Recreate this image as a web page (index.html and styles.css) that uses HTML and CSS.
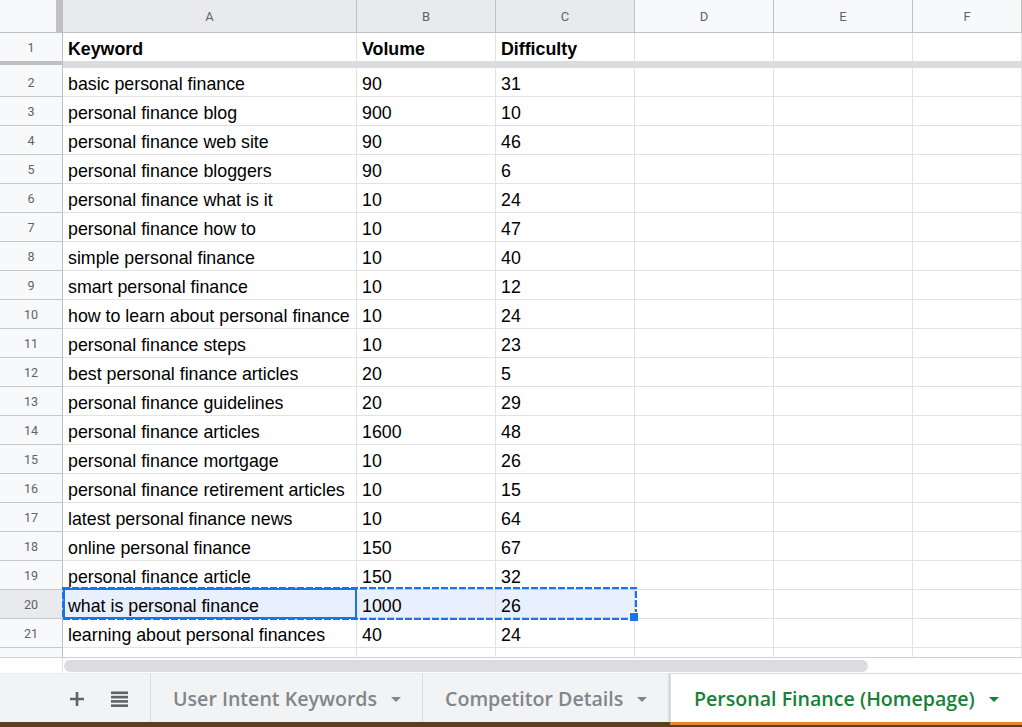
FILE: index.html
```html
<!DOCTYPE html>
<html>
<head>
<meta charset="utf-8">
<link rel="stylesheet" href="styles.css">
</head>
<body>
<div class="app">
  <div class="grid">
    <div class="row hdr">
      <div class="corner"></div>
      <div class="ch sel">A</div><div class="ch sel">B</div><div class="ch sel">C</div>
      <div class="ch">D</div><div class="ch">E</div><div class="ch">F</div>
    </div>
    <div class="row r1">
      <div class="rh">1</div>
      <div class="c b">Keyword</div><div class="c b">Volume</div><div class="c b">Difficulty</div>
      <div class="c"></div><div class="c"></div><div class="c"></div>
    </div>
    <div class="row band"><div class="band-rh"></div><div class="band-c"></div></div>
    <div class="row"><div class="rh">2</div><div class="c">basic personal finance</div><div class="c">90</div><div class="c">31</div><div class="c"></div><div class="c"></div><div class="c"></div></div>
    <div class="row"><div class="rh">3</div><div class="c">personal finance blog</div><div class="c">900</div><div class="c">10</div><div class="c"></div><div class="c"></div><div class="c"></div></div>
    <div class="row"><div class="rh">4</div><div class="c">personal finance web site</div><div class="c">90</div><div class="c">46</div><div class="c"></div><div class="c"></div><div class="c"></div></div>
    <div class="row"><div class="rh">5</div><div class="c">personal finance bloggers</div><div class="c">90</div><div class="c">6</div><div class="c"></div><div class="c"></div><div class="c"></div></div>
    <div class="row"><div class="rh">6</div><div class="c">personal finance what is it</div><div class="c">10</div><div class="c">24</div><div class="c"></div><div class="c"></div><div class="c"></div></div>
    <div class="row"><div class="rh">7</div><div class="c">personal finance how to</div><div class="c">10</div><div class="c">47</div><div class="c"></div><div class="c"></div><div class="c"></div></div>
    <div class="row"><div class="rh">8</div><div class="c">simple personal finance</div><div class="c">10</div><div class="c">40</div><div class="c"></div><div class="c"></div><div class="c"></div></div>
    <div class="row"><div class="rh">9</div><div class="c">smart personal finance</div><div class="c">10</div><div class="c">12</div><div class="c"></div><div class="c"></div><div class="c"></div></div>
    <div class="row"><div class="rh">10</div><div class="c">how to learn about personal finance</div><div class="c">10</div><div class="c">24</div><div class="c"></div><div class="c"></div><div class="c"></div></div>
    <div class="row"><div class="rh">11</div><div class="c">personal finance steps</div><div class="c">10</div><div class="c">23</div><div class="c"></div><div class="c"></div><div class="c"></div></div>
    <div class="row"><div class="rh">12</div><div class="c">best personal finance articles</div><div class="c">20</div><div class="c">5</div><div class="c"></div><div class="c"></div><div class="c"></div></div>
    <div class="row"><div class="rh">13</div><div class="c">personal finance guidelines</div><div class="c">20</div><div class="c">29</div><div class="c"></div><div class="c"></div><div class="c"></div></div>
    <div class="row"><div class="rh">14</div><div class="c">personal finance articles</div><div class="c">1600</div><div class="c">48</div><div class="c"></div><div class="c"></div><div class="c"></div></div>
    <div class="row"><div class="rh">15</div><div class="c">personal finance mortgage</div><div class="c">10</div><div class="c">26</div><div class="c"></div><div class="c"></div><div class="c"></div></div>
    <div class="row"><div class="rh">16</div><div class="c">personal finance retirement articles</div><div class="c">10</div><div class="c">15</div><div class="c"></div><div class="c"></div><div class="c"></div></div>
    <div class="row"><div class="rh">17</div><div class="c">latest personal finance news</div><div class="c">10</div><div class="c">64</div><div class="c"></div><div class="c"></div><div class="c"></div></div>
    <div class="row"><div class="rh">18</div><div class="c">online personal finance</div><div class="c">150</div><div class="c">67</div><div class="c"></div><div class="c"></div><div class="c"></div></div>
    <div class="row"><div class="rh">19</div><div class="c">personal finance article</div><div class="c">150</div><div class="c">32</div><div class="c"></div><div class="c"></div><div class="c"></div></div>
    <div class="row"><div class="rh rh-sel">20</div><div class="c hl">what is personal finance</div><div class="c hl">1000</div><div class="c hl">26</div><div class="c"></div><div class="c"></div><div class="c"></div></div>
    <div class="row"><div class="rh">21</div><div class="c">learning about personal finances</div><div class="c">40</div><div class="c">24</div><div class="c"></div><div class="c"></div><div class="c"></div></div>
    <div class="row partial"><div class="rh"></div><div class="c"></div><div class="c"></div><div class="c"></div><div class="c"></div><div class="c"></div><div class="c"></div></div>

    <svg class="marquee" width="575" height="33" viewBox="0 0 575 33"><rect x="1" y="1" width="573" height="31" fill="none" stroke="#1a73e8" stroke-width="2.4" stroke-dasharray="7 2"/></svg>
    <div class="active-cell"></div>
    <div class="handle"></div>
  </div>

  <div class="hscroll">
    <div class="hscroll-rh"></div>
    <div class="thumb"></div>
  </div>

  <div class="tabbar">
    <div class="tools">
      <svg class="ico" width="16" height="16" viewBox="0 0 16 16"><path d="M8 1v14M1 8h14" stroke="#5f6368" stroke-width="2.6" fill="none"/></svg>
      <svg class="ico" width="17" height="17" viewBox="0 0 17 17"><rect x="0" y="0.5" width="17" height="2.6" fill="#5f6368"/><rect x="0" y="4.8" width="17" height="2.6" fill="#5f6368"/><rect x="0" y="9.1" width="17" height="2.6" fill="#5f6368"/><rect x="0" y="13.4" width="17" height="2.6" fill="#5f6368"/></svg>
    </div>
    <div class="tab t1"><span class="tab-label">User Intent Keywords</span><svg class="caret" width="10" height="5" viewBox="0 0 10 5"><path d="M0 0h10L5 5z" fill="#80868b"/></svg></div>
    <div class="tab t2"><span class="tab-label">Competitor Details</span><svg class="caret" width="10" height="5" viewBox="0 0 10 5"><path d="M0 0h10L5 5z" fill="#80868b"/></svg></div>
    <div class="tab active"><span class="tab-label">Personal Finance (Homepage)</span><svg class="caret" width="10" height="5" viewBox="0 0 10 5"><path d="M0 0h10L5 5z" fill="#188038"/></svg></div>
  </div>
  <div class="strip"><div class="strip-left"></div><div class="strip-right"></div></div>
</div>
</body>
</html>
```

FILE: styles.css
```css
* { box-sizing: border-box; }
html, body { margin: 0; padding: 0; }
body {
  width: 1022px;
  height: 727px;
  overflow: hidden;
  background: #fff;
  font-family: "Liberation Sans", Arial, sans-serif;
}
.app { display: flex; flex-direction: column; height: 727px; }

.grid { position: relative; }
.row {
  display: grid;
  grid-template-columns: 63px 294px 139px 139px 139px 139px 1fr;
  height: 29px;
}
.hdr { height: 33px; }
.corner {
  background: #f8f9fa;
  border-right: 7px solid #c0c0c0;
  border-bottom: 1px solid #c0c0c0;
}
.ch {
  background: #f8f9fa;
  border-right: 1px solid #c0c0c0;
  border-bottom: 1px solid #c0c0c0;
  font-family: Roboto, "Liberation Sans", sans-serif;
  font-size: 13px;
  color: #5f6368;
  display: flex;
  align-items: center;
  justify-content: center;
  padding-top: 1px;
}
.ch.sel { background: #e8eaed; }

.rh {
  background: #f8f9fa;
  border-right: 1px solid #c0c0c0;
  border-bottom: 1px solid #c7c7c7;
  font-family: Roboto, "Liberation Sans", sans-serif;
  font-size: 12.5px;
  color: #5f6368;
  display: flex;
  align-items: center;
  justify-content: center;
  padding-top: 1px;
}
.rh-sel { background: #e8eaed; }

.c {
  border-right: 1px solid #e2e2e2;
  border-bottom: 1px solid #e2e2e2;
  font-size: 17.8px;
  line-height: 24px;
  padding: 4px 0 0 5px;
  color: #000;
  white-space: nowrap;
  overflow: hidden;
}
.c.b { font-weight: bold; }
.c.hl { background: #e8f0fe; }

.r1 { height: 28px; }
.r1 .rh, .r1 .c { border-bottom: none; }

.band { height: 7px; grid-template-columns: 63px 1fr; }
.band-rh {
  background: linear-gradient(#c0c0c0 0 4px, #f8f9fa 4px);
  border-right: 1px solid #c0c0c0;
}
.band-c { background: #dadce0; }

.partial { height: 10px; }
.partial .c, .partial .rh { border-bottom-color: #d0d0d0; }

.marquee { position: absolute; left: 62px; top: 587px; }
.active-cell {
  position: absolute;
  left: 63px;
  top: 588px;
  width: 294px;
  height: 31px;
  border: 2px solid #1a73e8;
}
.handle {
  position: absolute;
  left: 629px;
  top: 612px;
  width: 9px;
  height: 9px;
  background: #1a73e8;
  border-left: 1px solid #fff;
  border-top: 1px solid #fff;
}

.hscroll {
  height: 15px;
  display: flex;
  align-items: flex-start;
  background: #fff;
}
.hscroll-rh {
  width: 63px;
  height: 15px;
  border-right: 1px solid #e2e2e2;
}
.thumb {
  margin: 2px 0 0 1px;
  width: 804px;
  height: 12px;
  border-radius: 6px;
  background: #dadce0;
}

.tabbar {
  height: 49px;
  display: flex;
  background: #f1f3f4;
  border-top: 1px solid #e8eaed;
  font-family: "Open Sans", Roboto, sans-serif;
  font-weight: 600;
  font-size: 19.6px;
}
.tools {
  width: 150px;
  display: flex;
  align-items: center;
  padding: 2px 0 0 69px;
  gap: 26px;
}
.tab {
  display: flex;
  align-items: center;
  border-left: 1px solid #dadce0;
  padding: 0 0 0 22px;
  color: #80868b;
  gap: 14px;
  white-space: nowrap;
}
.t1 { width: 272px; }
.t2 { width: 248px; }
.tab.active {
  flex: 1;
  background: #fff;
  color: #188038;
  padding-left: 23px;
  border-left: 1px solid #dadce0;
  box-shadow: -1px 0 2px rgba(60,64,67,0.25);
}
.caret { margin-top: 3px; }

.strip { height: 5px; display: flex; }
.strip-left { width: 670px; background: #5b3e1f; }
.strip-right { flex: 1; background: linear-gradient(#e8862b 0 3px, #5b3e1f 3px); }
```
